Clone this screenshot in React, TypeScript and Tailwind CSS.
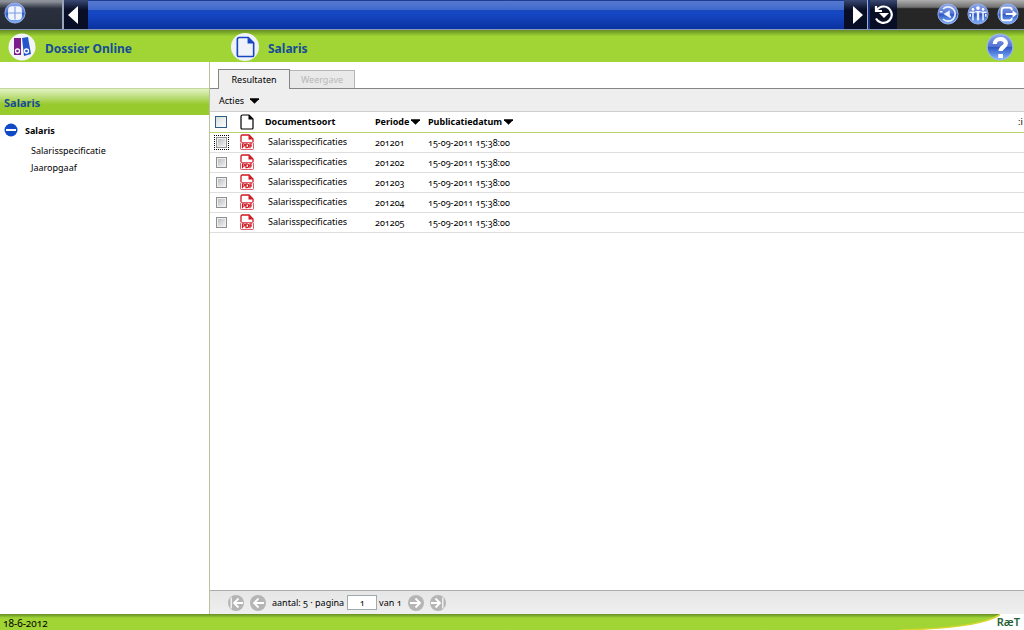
import type { ReactNode } from "react";

const rows = [
  { period: "201201", published: "15-09-2011 15:38:00" },
  { period: "201202", published: "15-09-2011 15:38:00" },
  { period: "201203", published: "15-09-2011 15:38:00" },
  { period: "201204", published: "15-09-2011 15:38:00" },
  { period: "201205", published: "15-09-2011 15:38:00" },
];

function Orb({ label, id, large = false, children }: { label: string; id: string; large?: boolean; children: ReactNode }) {
  return (
    <button aria-label={label} className="shrink-0">
      <svg viewBox="0 0 24 24" className={large ? "size-7" : "size-[22px]"} fill="none">
        <defs>
          <linearGradient id={id} x1="0" y1="0" x2="0" y2="1">
            <stop offset="0" stopColor="#8ea8ec" />
            <stop offset="0.48" stopColor="#5273d0" />
            <stop offset="0.52" stopColor="#2f59c4" />
            <stop offset="1" stopColor="#86b6ff" />
          </linearGradient>
        </defs>
        <circle cx="12" cy="12" r="11" fill={`url(#${id})`} stroke="#9db5ef" />
        {children}
      </svg>
    </button>
  );
}

function Page({ className }: { className: string }) {
  return (
    <svg viewBox="0 0 14 16" className={className} fill="none" stroke="currentColor" aria-hidden="true">
      <path d="M2.5 1H9l4 4v9a1 1 0 0 1-1 1H2a1 1 0 0 1-1-1V2.5A1.5 1.5 0 0 1 2.5 1z" strokeWidth="1.2" />
      <path d="M8.5 1v4.5H13z" fill="currentColor" stroke="none" />
    </svg>
  );
}

function PdfIcon() {
  return (
    <svg viewBox="0 0 14 16" className="block h-4 w-3.5" fill="none" aria-label="PDF">
      <path d="M1 8V2.2A1.2 1.2 0 0 1 2.2 1H9l4 4v3" stroke="#cf1723" strokeWidth="1.3" />
      <path d="M8.5 1v4.5H13z" fill="#cf1723" />
      <rect x="0.5" y="8.5" width="13" height="7" rx="1" fill="#fff" stroke="#cf1723" strokeOpacity="0.7" />
      <path d="M2.5 14.2V9.8h1.3a1.2 1.2 0 0 1 0 2.4H2.5M6 9.8v3.8h.8a1.9 1.9 0 0 0 0-3.8zM10 14.2V9.8h2.2M10 11.9h2" stroke="#cf1723" strokeWidth="1.2" />
    </svg>
  );
}

function Down() {
  return (
    <svg viewBox="0 0 10 6" className="h-1.5 w-[9px] shrink-0" aria-hidden="true">
      <path d="M0 0h10v1L5 6 0 1z" fill="#000" />
    </svg>
  );
}

function Check({ label, head = false }: { label: string; head?: boolean }) {
  return (
    <input
      type="checkbox"
      aria-label={label}
      className={
        head
          ? "block size-3 appearance-none border border-[#2a5d88] bg-linear-to-br from-[#d5dedc] to-white"
          : "block size-[11px] appearance-none border border-[#8e8f8f] bg-linear-to-br from-[#b5babf] to-[#f4f4f4] shadow-[inset_0_0_0_1px_#efefef]"
      }
    />
  );
}

function PagerButton({ label, back = false, bar = false }: { label: string; back?: boolean; bar?: boolean }) {
  return (
    <button aria-label={label}>
      <svg viewBox="0 0 16 16" className={back ? "block size-4 -scale-x-100" : "block size-4"} fill="none">
        <circle cx="8" cy="8" r="8" fill="#b5b5b5" />
        <path d={bar ? "M1 8h8.5M5.5 3.5 10 8l-4.5 4.5" : "M2 8h10M7.5 3.5 12 8l-4.5 4.5"} stroke="#fff" strokeWidth="1.8" />
        {bar && <path d="M12.8 2.5v11" stroke="#fff" strokeWidth="1.2" />}
      </svg>
    </button>
  );
}

export default function App() {
  return (
    <div className="flex h-screen flex-col overflow-hidden bg-white font-['Noto_Sans','Open_Sans',sans-serif] text-[9px] leading-3 text-black oldstyle-nums">
      <header className="flex h-[30px] shrink-0 border-b border-[#8796bd] bg-linear-to-b from-[#17337e] from-4% via-[#1645be] via-40% to-[#0b35a0]">
        <div className="flex w-[62px] items-start bg-linear-to-b from-[#8d9199] from-5% via-[#2a303e] via-30% to-[#252b36] pt-0.5 pl-1">
          <Orb label="Start" id="orb-start">
            <rect x="4.5" y="4.5" width="15" height="15" rx="4" fill="#eff4ff" />
            <path d="M12 5v14M5 12h14" stroke="#7c9be2" strokeWidth="1.2" />
          </Orb>
        </div>
        <button aria-label="Vorige" className="flex w-[26px] items-center border-l-2 border-[#9ba4bd] bg-linear-to-b from-[#3a4974] to-[#080e26] to-35% pl-1">
          <svg viewBox="0 0 10 18" className="h-[18px] w-2.5"><path d="M10 0v18L0 9z" fill="#fff" /></svg>
        </button>
        <div className="flex-1 bg-linear-to-b from-[#1e3d94] from-0% via-[#1648c5] via-45% to-[#0a32a0]">
          <div className="mt-px h-[9px] bg-linear-to-b from-[#5679cf] to-[#4069cd]" />
        </div>
        <button aria-label="Volgende" className="flex w-6 items-center justify-end border-r border-[#a5adc4] bg-linear-to-b from-[#3a4974] to-[#080e26] to-35% pr-1">
          <svg viewBox="0 0 10 18" className="h-[18px] w-2.5"><path d="M0 0v18l10-9z" fill="#fff" /></svg>
        </button>
        <button aria-label="Geschiedenis" className="flex w-[29px] items-center justify-center border-l-2 border-[#12307c] bg-linear-to-b from-[#3a4974] to-[#080e26] to-35%">
          <svg viewBox="0 0 20 20" className="size-5" fill="none">
            <path d="M2 1v5h6M2.5 5.5C6 0 14 0 17 6.5c3 7-4 13-10 11-2-.7-4-2-5-4" stroke="#fff" strokeWidth="2.2" />
            <path d="M5 8h10l-5 5z" fill="#fff" />
          </svg>
        </button>
        <div className="flex w-[127px] items-start justify-end gap-2 bg-linear-to-b from-[#b0b0b0] via-[#707070] via-25% to-[#262626] to-30% pt-[3px] pr-[5px]">
          <Orb label="Recent" id="orb-recent">
            <path d="M6.5 6.5a7.8 7.8 0 1 1 0 11" stroke="#eaf1ff" strokeWidth="1.8" />
            <path d="m7 12 7-4v8z" fill="#eaf1ff" />
            <path d="M3 9.5h3M12 12l3 4" stroke="#eaf1ff" strokeWidth="1.6" />
          </Orb>
          <Orb label="Organisatie" id="orb-org">
            <path d="M2.5 10h6M15.5 10h6M6.5 10v9M17.5 10v9M9 9.5h6M3.5 12v3M20.5 12v3" stroke="#eaf1ff" strokeWidth="1.7" />
            <path d="M12 9v10" stroke="#eaf1ff" strokeWidth="2.6" />
            <circle cx="6.5" cy="7" r="1.5" fill="#fff" /><circle cx="12" cy="5.5" r="2" fill="#fff" /><circle cx="17.5" cy="7" r="1.5" fill="#fff" />
          </Orb>
          <Orb label="Afmelden" id="orb-exit">
            <path d="M16 8V7a2 2 0 0 0-2-2H8a3 3 0 0 0-3 3v8a3 3 0 0 0 3 3h6a2 2 0 0 0 2-2v-1M9.5 12h10" stroke="#fff" strokeWidth="2" />
            <path d="m17 8 5 4-5 4z" fill="#fff" />
          </Orb>
        </div>
      </header>

      <div className="flex h-8 shrink-0 items-center bg-linear-to-b from-[#668e23] to-[#a0d535] to-20% pt-px pr-2.5 text-xs leading-4 font-bold text-[#174c96]">
        <div className="flex w-[210px] items-center gap-[9px] pl-2">
          <svg viewBox="0 0 28 28" className="size-7" aria-hidden="true">
            <circle cx="14" cy="14" r="13.5" fill="#f4f5fa" />
            <path d="M6 5h7v17H6z" fill="#7b1d8c" />
            <path d="m14 5 6-1 3 17-7 2z" fill="#2356cb" />
            <circle cx="9.5" cy="18" r="2" fill="#7b1d8c" stroke="#fff" strokeWidth="1.3" />
            <circle cx="18.5" cy="18" r="2" fill="#2356cb" stroke="#fff" strokeWidth="1.3" />
          </svg>
          <span className="pt-1">Dossier Online</span>
        </div>
        <div className="flex flex-1 items-center gap-[9px] pl-[21px]">
          <span className="flex size-7 items-center justify-center rounded-full bg-[#eff3f9] text-[#1746c2]"><Page className="h-[22px] w-[19px]" /></span>
          <h1 className="pt-1">Salaris</h1>
        </div>
        <Orb label="Help" id="orb-help" large>
          <path d="M7.5 9.5C7.5 3.8 17 3.8 17 9c0 3-4.5 3-4.5 6.5" stroke="#fff" strokeWidth="3.6" />
          <path d="M10.5 18h4v3.5h-4z" fill="#fff" />
        </Orb>
      </div>

      <div className="flex min-h-0 flex-1">
        <aside className="w-[210px] shrink-0 border-r border-[#b9c39b] pt-[26px]">
          <h2 className="h-[27px] border-t border-[#c2d99b] bg-linear-to-b from-[#e3f2c3] via-[#a3d044] via-50% to-[#96ca2d] to-60% pt-1.5 pl-1 text-[11px] leading-4 font-bold text-[#174c96]">Salaris</h2>
          <nav>
            <button className="flex items-center gap-[7px] pt-2 pl-1 font-bold">
              <svg viewBox="0 0 14 14" className="size-3.5" aria-hidden="true">
                <circle cx="7" cy="7" r="6.5" fill="#124ac5" /><path d="M2 7h10" stroke="#fff" strokeWidth="2" />
              </svg>
              <span className="pt-0.5">Salaris</span>
            </button>
            <ul className="flex flex-col gap-[5px] pt-2 pl-[31px]">
              <li><a href="#specificatie">Salarisspecificatie</a></li>
              <li><a href="#jaaropgaaf">Jaaropgaaf</a></li>
            </ul>
          </nav>
        </aside>

        <main className="flex min-w-0 flex-1 flex-col">
          <div className="flex h-[27px] shrink-0 items-end border-b border-[#858585] pl-2" role="tablist">
            <button role="tab" aria-selected="true" className="-mb-px h-5 w-[72px] border border-b-0 border-[#858585] bg-[#eeeeee]">Resultaten</button>
            <button role="tab" aria-selected="false" disabled className="h-[18px] w-[65px] border border-b-0 border-l-0 border-[#b5b5b5] bg-[#e9e9e9] text-[#b8b8b8]">Weergave</button>
          </div>
          <div className="flex h-[23px] shrink-0 items-center border-b border-[#cecece] bg-[#eeeeee] pt-px pl-[9px]">
            <button className="flex items-center gap-1.5">Acties <Down /></button>
          </div>
          <div className="min-h-0 flex-1">
            <table className="w-full table-fixed border-collapse text-left">
              <colgroup>
                <col className="w-[23px]" />
                <col className="w-8" />
                <col className="w-[110px]" />
                <col className="w-[53px]" />
                <col />
                <col className="w-1.5" />
              </colgroup>
              <thead>
                <tr className="h-5 border-b border-[#b5d566]">
                  <th className="pt-px pl-[5px]"><Check label="Alles selecteren" head /></th>
                  <th className="pl-[7px]"><Page className="h-4 w-3.5" /></th>
                  <th>Documentsoort</th>
                  <th><button className="flex items-center gap-0.5">Periode <Down /></button></th>
                  <th><button className="flex items-center gap-0.5">Publicatiedatum <Down /></button></th>
                  <th className="overflow-hidden font-normal whitespace-nowrap">:i</th>
                </tr>
              </thead>
              <tbody>
                {rows.map((row, i) => (
                  <tr key={row.period} className="h-5 border-b border-[#dedede]">
                    <td className="pt-px pl-1">
                      <span className={i === 0 ? "block w-[15px] border border-dotted border-black p-px" : "block w-[15px] p-0.5"}>
                        <Check label={`Selecteer ${row.period}`} />
                      </span>
                    </td>
                    <td className="pl-[7px]"><PdfIcon /></td>
                    <td className="pl-[3px]">Salarisspecificaties</td>
                    <td className="pt-0.5">{row.period}</td>
                    <td className="pt-0.5">{row.published}</td>
                    <td />
                  </tr>
                ))}
              </tbody>
            </table>
          </div>
          <footer className="flex h-6 shrink-0 items-center gap-1.5 border-t border-[#adadad] bg-linear-to-b from-[#e6e6e6] to-[#efefef] pl-[18px]">
            <PagerButton label="Eerste pagina" back bar />
            <PagerButton label="Vorige pagina" back />
            <label className="flex items-center gap-[3px]">
              aantal: 5 · pagina
              <input defaultValue="1" className="h-[15px] w-[30px] border border-[#9dabaf] bg-white text-center" />
            </label>
            <span className="-ml-1">van 1</span>
            <PagerButton label="Volgende pagina" />
            <PagerButton label="Laatste pagina" bar />
          </footer>
        </main>
      </div>

      <footer className="flex h-4 shrink-0 items-center justify-between bg-linear-to-b from-[#668e23] to-[#a0d535] to-25% pl-[3px]">
        <time className="pt-0.5 text-[10px]">18-6-2012</time>
        <div className="relative h-full w-[124px]">
          <svg viewBox="0 0 124 17" preserveAspectRatio="none" className="absolute inset-0 h-full w-full" aria-hidden="true">
            <path d="M124 0H100C83 12 44 16 0 17h124z" fill="#fff" />
            <path d="M100 1C83 12 44 16 0 17" fill="none" stroke="#d5d72c" strokeWidth="1.5" />
          </svg>
          <span className="absolute right-1 bottom-0 text-[11px] leading-4 font-semibold text-[#256336]">RæT</span>
        </div>
      </footer>
    </div>
  );
}
